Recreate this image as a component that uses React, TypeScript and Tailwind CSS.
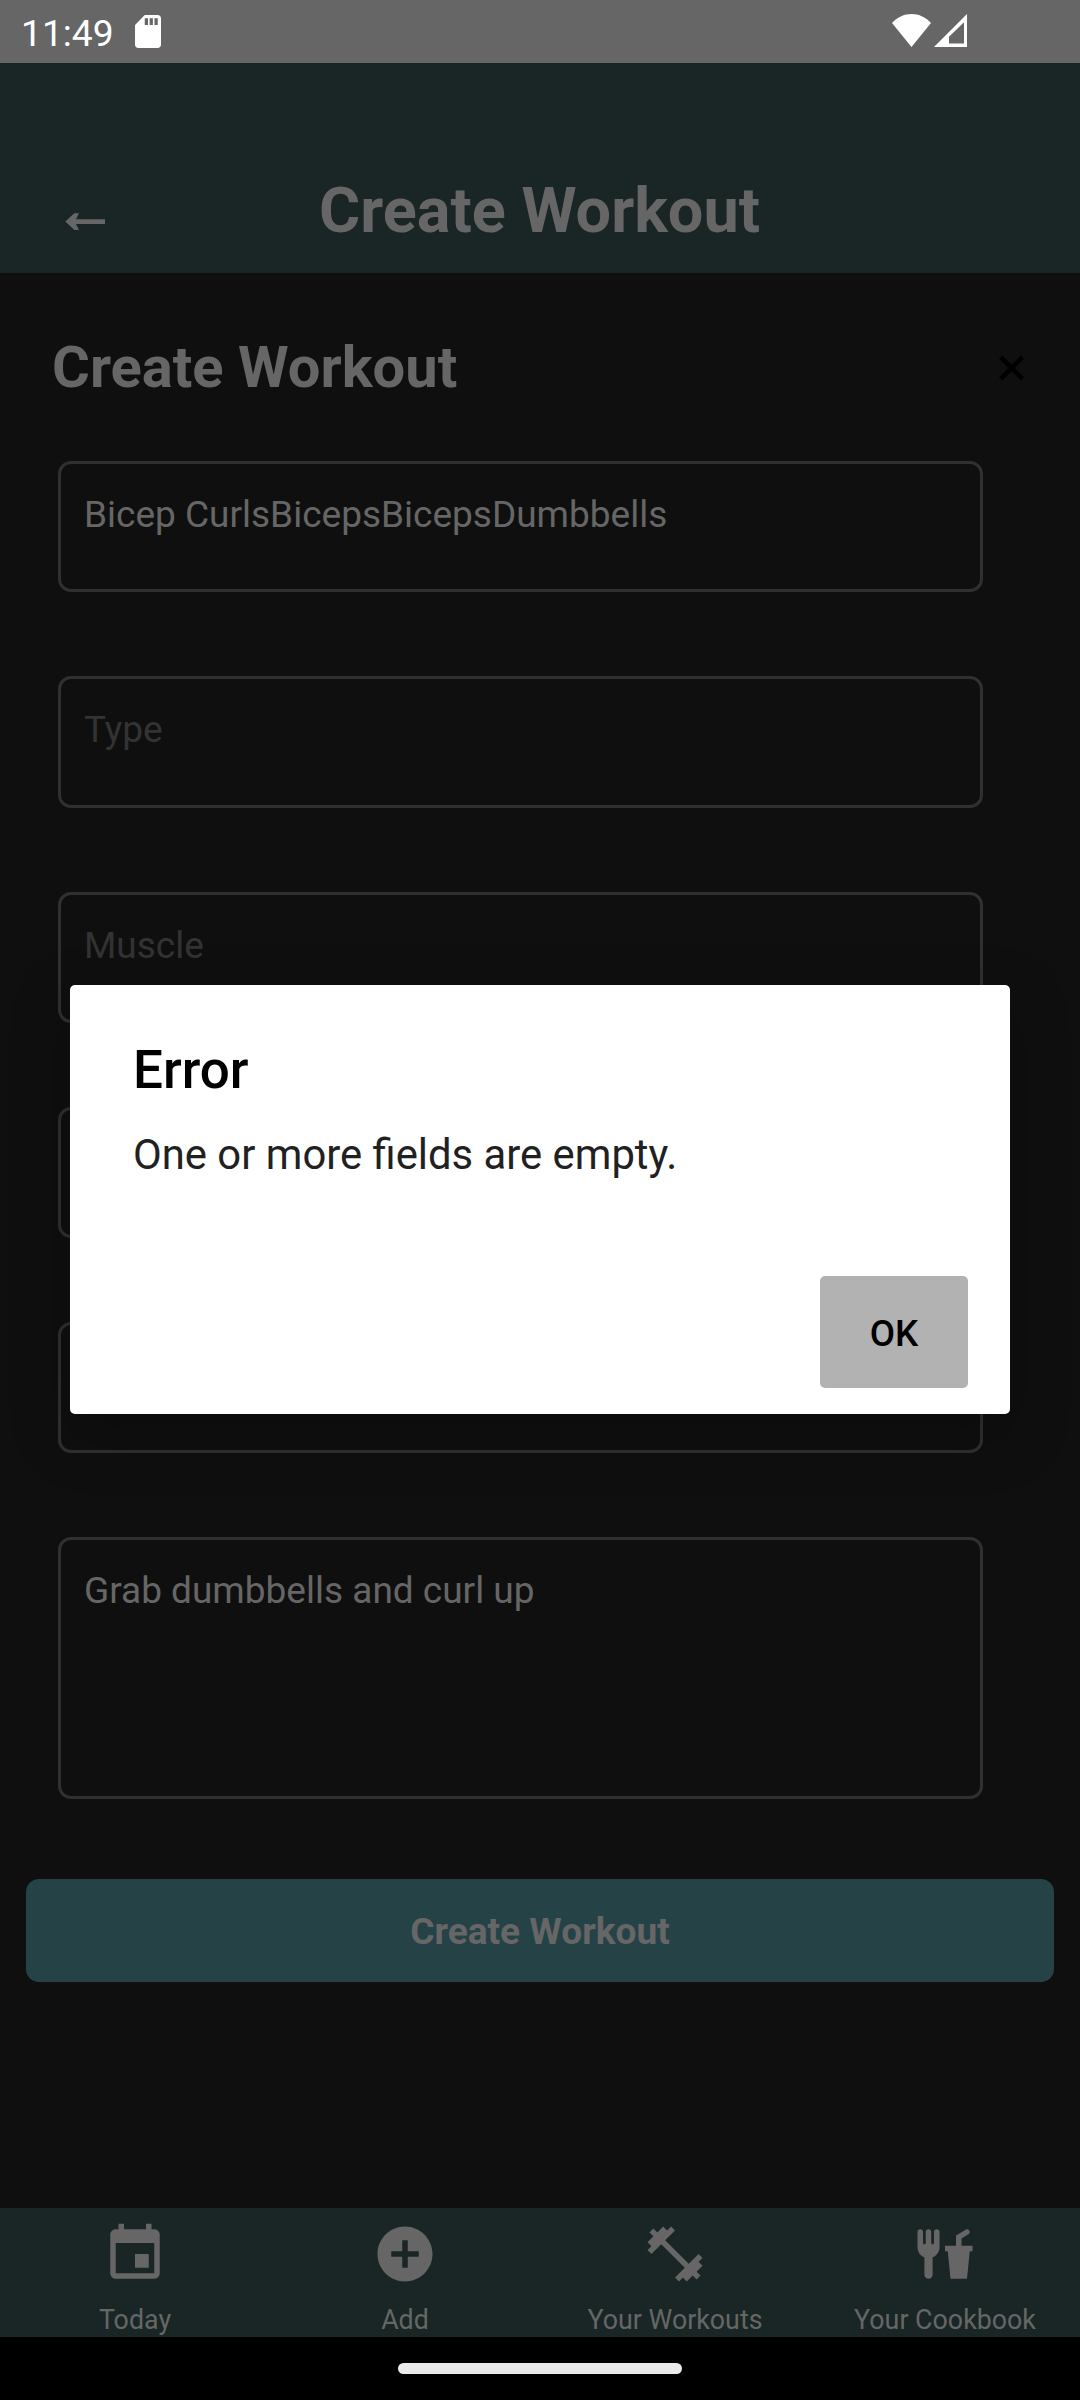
import { MdAddCircle, MdEvent, MdFitnessCenter } from "react-icons/md";

function StatusBar() {
  return (
    <div className="flex h-[63px] shrink-0 items-start bg-[#666666] text-white">
      <span className="ml-[21px] mt-[12px] w-[114px] whitespace-nowrap text-[37.2px] leading-[43px]">11:49</span>
      <svg className="mt-[15px] h-[33px] w-[26px]" viewBox="4 2 16 20" preserveAspectRatio="none" fill="currentColor">
        <path d="M18 2h-8L4.02 8 4 20c0 1.1.9 2 2 2h12c1.1 0 2-.9 2-2V4c0-1.1-.9-2-2-2zm-6 6h-2V4h2v4zm3 0h-2V4h2v4zm3 0h-2V4h2v4z" />
      </svg>
      <svg className="ml-[731px] mt-[14px] h-[33px] w-[39px]" viewBox="0 0 39 33" fill="currentColor">
        <path d="M0 9C5 3.4 12 0 19.5 0S34 3.4 39 9L19.5 33z" />
      </svg>
      <svg className="ml-[3px] mt-[14px] h-[33px] w-[33px]" viewBox="0 0 33 33" fill="currentColor" fillRule="evenodd">
        <path d="M33 0v33H0zM30 8.3L15 22.8V29.5H30z" />
      </svg>
    </div>
  );
}

function Header() {
  return (
    <header className="flex h-[210px] shrink-0 items-start justify-between bg-[#192625] text-[#666666]">
      <svg className="ml-[65px] mt-[150px] h-[18px] w-[40px]" viewBox="0 0 40 18" fill="currentColor">
        <path d="M.4 8.6L9.3 .3H14l-3 6H40v4.8H11l3 6H9.3z" />
      </svg>
      <h1 className="mt-[111px] text-[63px] font-bold leading-[74px]">Create Workout</h1>
      <div className="w-[106px]" />
    </header>
  );
}

type FieldProps = { value?: string; placeholder?: string; tall?: boolean };

function Field({ value, placeholder, tall }: FieldProps) {
  return (
    <div
      className={`ml-[58px] w-[925px] rounded-[13px] border-[3px] border-[#303030] px-[23px] pt-[29px] text-[37px] leading-[43px] ${
        tall ? "h-[262px]" : "h-[131.25px]"
      } ${value ? "text-[#666666]" : "text-[#333333]"}`}
    >
      {value ?? placeholder}
    </div>
  );
}

function Form() {
  return (
    <main className="flex-1">
      <div className="flex items-start justify-between pl-[52px] pr-[56px] pt-[60px] text-[#666666]">
        <h2 className="text-[57.9px] font-bold leading-[68px]">Create Workout</h2>
        <svg className="mt-[22px] h-[26px] w-[25px]" viewBox="0 0 25 26" stroke="#000" strokeWidth="4.6">
          <path d="M1.7 2.2l21.6 21.6M23.3 2.2L1.7 23.8" />
        </svg>
      </div>
      <div className="mt-[60px] flex flex-col gap-[84px]">
        <Field value="Bicep CurlsBicepsBicepsDumbbells" />
        <Field placeholder="Type" />
        <Field placeholder="Muscle" />
        <Field placeholder="" />
        <Field placeholder="" />
        <Field value="Grab dumbbells and curl up" tall />
      </div>
      <button className="mx-[26px] mt-[80px] flex h-[103px] w-[1028px] items-center justify-center rounded-[13px] bg-[#254246] pt-[2px] text-[37.1px] font-bold leading-[43px] text-[#666666]">
        Create Workout
      </button>
    </main>
  );
}

function ForkDrink() {
  return (
    <svg className="size-[66px]" viewBox="0 0 24 24" fill="currentColor">
      <path d="M3,3A1,1 0 0,0 2,4V8L2,9.5C2,11.19 3.03,12.63 4.5,13.22V19.5A1.5,1.5 0 0,0 6,21A1.5,1.5 0 0,0 7.5,19.5V13.22C8.97,12.63 10,11.19 10,9.5V8L10,4A1,1 0 0,0 9,3A1,1 0 0,0 8,4V8A0.5,0.5 0 0,1 7.5,8.5A0.5,0.5 0 0,1 7,8V4A1,1 0 0,0 6,3A1,1 0 0,0 5,4V8A0.5,0.5 0 0,1 4.5,8.5A0.5,0.5 0 0,1 4,8V4A1,1 0 0,0 3,3M19.88,3C19.75,3 19.62,3.09 19.5,3.16L16,5.25V9H12V11H13L14,21H20L21,11H22V9H18V6.34L20.5,4.84C21,4.56 21.13,4 20.84,3.5C20.63,3.14 20.26,2.95 19.88,3Z" />
    </svg>
  );
}

const tabs = [
  { label: "Today", icon: <MdEvent className="size-[66px]" /> },
  { label: "Add", icon: <MdAddCircle className="size-[66px]" /> },
  { label: "Your Workouts", icon: <MdFitnessCenter className="size-[66px]" /> },
  { label: "Your Cookbook", icon: <ForkDrink /> },
];

function TabBar() {
  return (
    <nav className="grid h-[129px] shrink-0 grid-cols-4 bg-[#192625] text-[#666666]">
      {tabs.map((tab) => (
        <div key={tab.label} className="flex flex-col items-center pt-[13px]">
          {tab.icon}
          <span className="mt-[18px] whitespace-nowrap text-[26.8px] leading-[31px]">{tab.label}</span>
        </div>
      ))}
    </nav>
  );
}

function ErrorDialog() {
  return (
    <div
      role="dialog"
      className="absolute left-[70px] top-[985px] flex h-[429px] w-[940px] flex-col rounded-[5px] bg-white pl-[63px] pr-[42px] shadow-[0_20px_60px_rgba(0,0,0,0.25)]"
    >
      <h2 className="mt-[54px] text-[53px] font-medium leading-[62px] text-black">Error</h2>
      <p className="mt-[29px] text-[41.8px] leading-[50px] text-[#212121]">One or more fields are empty.</p>
      <button className="mb-[26px] mt-auto flex h-[112px] w-[148px] items-center justify-center self-end rounded-[5px] bg-[#b2b2b2] pt-[2px] text-[36.75px] font-medium leading-[43px] text-black">
        OK
      </button>
    </div>
  );
}

export default function App() {
  return (
    <div className="relative flex h-[2400px] w-[1080px] flex-col overflow-hidden bg-[#0f0f0f] font-[Roboto,sans-serif]">
      <StatusBar />
      <Header />
      <Form />
      <TabBar />
      <div className="flex h-[63px] shrink-0 items-start justify-center bg-black pt-[26px]">
        <div className="h-[11px] w-[284px] rounded-full bg-[#eaeaea]" />
      </div>
      <ErrorDialog />
    </div>
  );
}
